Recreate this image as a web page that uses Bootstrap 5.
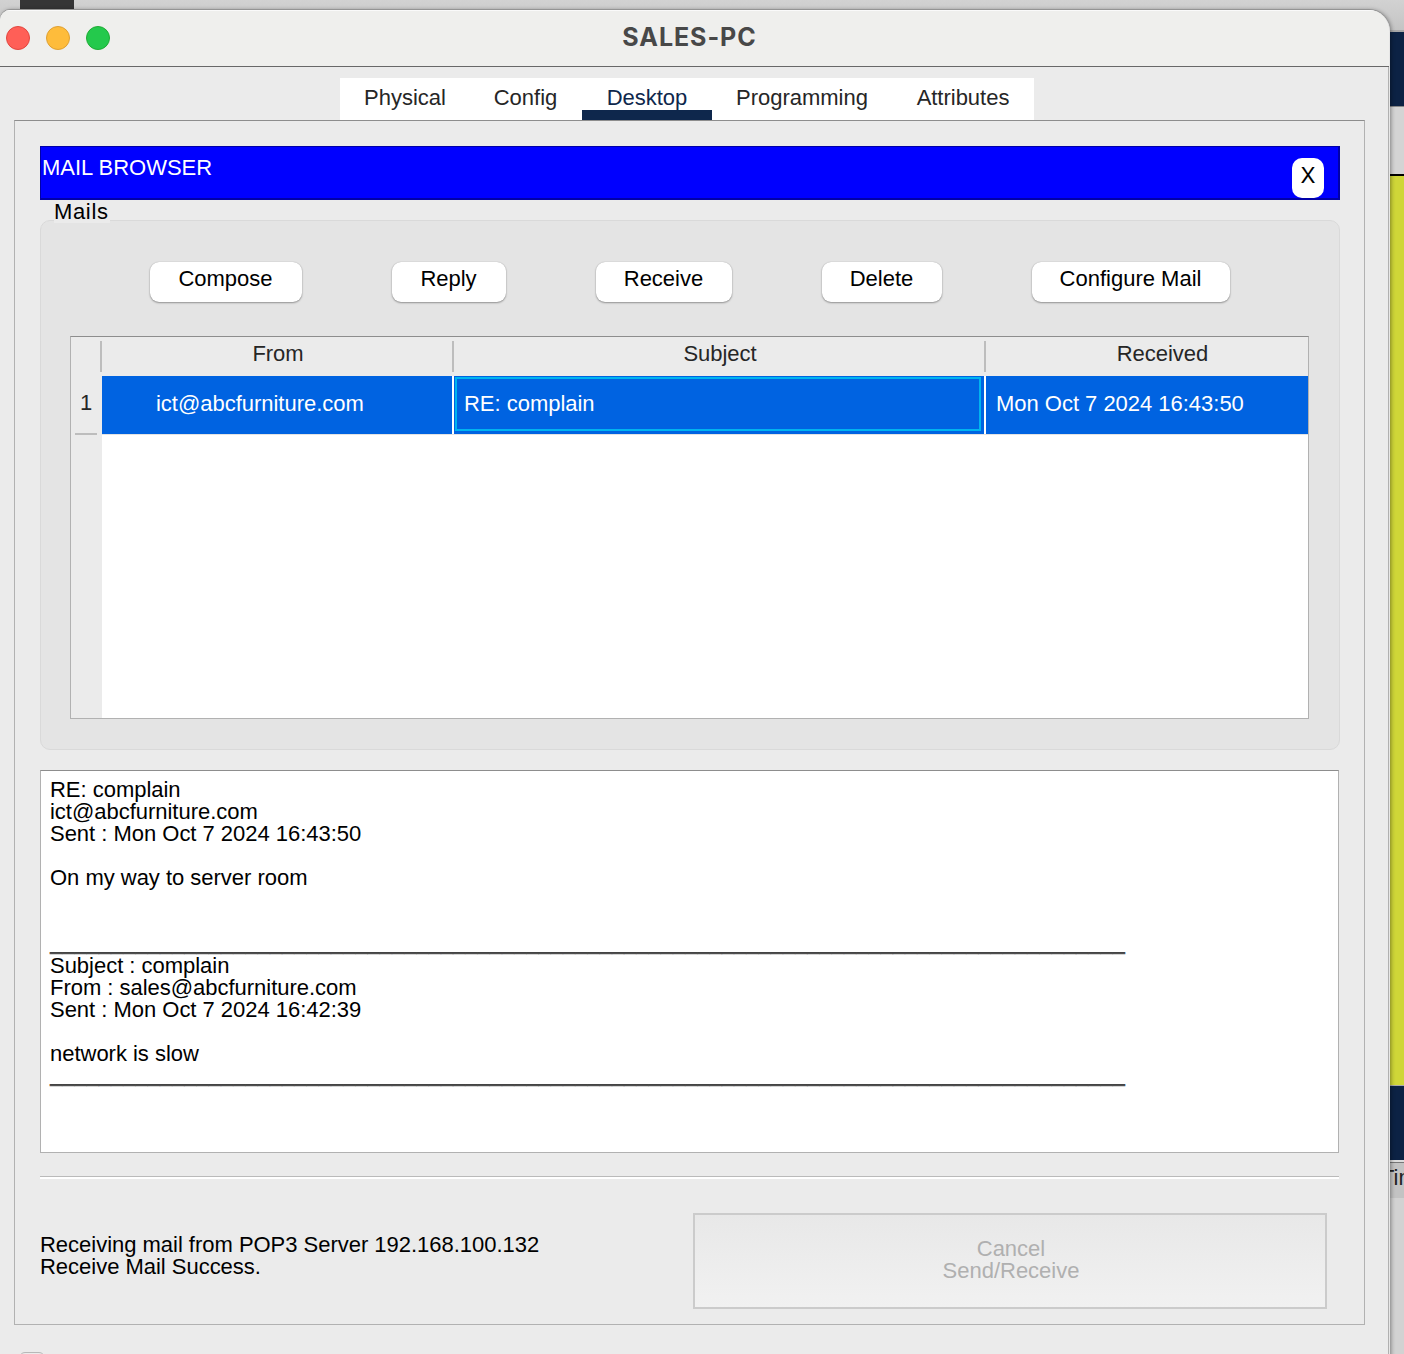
<!DOCTYPE html>
<html lang="en">
<head>
<meta charset="utf-8">
<title>SALES-PC</title>
<link href="https://cdn.jsdelivr.net/npm/bootstrap@5.3.0/dist/css/bootstrap.min.css" rel="stylesheet">
<style>
body{width:1404px;height:1354px;overflow:hidden;font:22px/22px "Liberation Sans",Arial,sans-serif;color:#000;background:#d3d3d3;letter-spacing:-.02px}
.desk{width:1404px;height:1354px;background:#cecece}
.desk-top{height:32px;background:linear-gradient(#d2d2d2,#c4c4c4);padding-left:20px;border-bottom:2px solid #a8a8a8}
.desk-dark{width:54px;height:30px;background:#353536}
.desk-side{width:24px;margin-left:auto}
.navy{background:#0c2244}
.lime{background:#cfd638}
.peek{height:36px;background:#c3c3c3;border-top:1px solid #777;overflow:hidden;color:#222;white-space:nowrap;padding:4px 0 0 1px}
.win{left:0;top:10px;width:1390px;height:1360px;background:#ebebeb;border-right:1px solid #e6e6e6;border-top-right-radius:21px;border-top-left-radius:10px;box-shadow:0 -1px 0 #949494,1px 0 4px rgba(0,0,0,.4);overflow:hidden}
.win-edge{width:1389px;border-right:1px solid #b0b0b0;height:1300px}
.titlebar{height:57px;background:#efefed;border-top:1px solid #fafafa;border-bottom:1px solid #686868;padding:0 0 2px 6px;gap:16px}
.light{width:24px;height:24px;border-radius:50%;border:1px solid}
.title{font:700 25px/30px Inter,"Liberation Sans",sans-serif;color:#484848;letter-spacing:.95px;left:0;width:1379px;top:12px}
.tabs{margin:11px 0 0 340px;height:42px;width:694px;background:#fff;color:#262626}
.tabs .nav-link{padding:9px 0 0;color:inherit;line-height:22px;border-radius:0;height:42px;text-align:center}
.tabs .nav-link.active{color:#0e274c;border-bottom:10px solid #0e274c}
.pane{margin-left:14px;width:1351px;height:1205px;border:1px solid #b1b1b1;border-top-color:#8d8d8d;padding:25px 25px 0}
.mailbar{width:1300px;height:54px;background:#00f;border:solid #0000a8;border-width:1px 2px 2px 1px;color:#fff;padding:10px 14px 0 1px}
.xbtn{width:32px;height:40px;border:0;background:#fff;border-radius:10px;padding:0 0 7px;font:22px/22px Inter,sans-serif;margin-top:1px;color:#000}
.legend-txt{height:20px;padding:2px 0 0 14px;letter-spacing:.65px;position:relative;z-index:1;width:max-content;margin:0}
.legend-txt span{display:block;height:23px;background:#ebebeb;padding-right:1px;margin-top:-2px;line-height:24px}
.group{width:1300px;height:530px;background:#e4e4e4;border:1px solid #d9d9d9;border-radius:10px;padding:41px 29px 0}
.tools{padding:0 80px 0 80px;height:74px}
.mbtn{height:40px;background:#fff;border-radius:9px;border:0;box-shadow:0 1px 2px rgba(0,0,0,.35),0 0 1px rgba(0,0,0,.25);font-size:22px;line-height:22px;padding:0 1px 6px 0;text-align:center;color:#000;display:block}
.grid{width:1239px;height:383px;background:#fff;border:1px solid #b1b1b1;border-top-color:#8d8d8d}
.rowhead{width:31px;background:#ebebeb;color:#262626}
.rowhead div{width:22px;height:94px;margin:4px 0 0 4px;border-bottom:2px solid #bdbdbd;padding-top:51px;text-align:center}
.heads{height:39px;background:#ebebeb;color:#262626}
.heads div{height:31px;margin-top:4px;text-align:center;padding:2px 0 0 2px}
.sep{border-left:2px solid #bdbdbd}
.cells{height:59px;border-bottom:1px solid #e3e3e3;color:#fff;gap:2px}
.cell{background:#0063e1;height:58px;padding-top:17px}
.cell.subject{width:530px;padding:1px 3px 3px 1px}
.focused{height:54px;border:2px solid #00b4f0;padding:14px 0 0 7px}
.reader{width:1299px;height:383px;background:#fff;border:1px solid #b1b1b1;border-top-color:#8d8d8d;margin:20px 0 0;padding:8px 9px;font:22px/22px "Liberation Sans",Arial,sans-serif;overflow:hidden}
.dash{position:relative;top:-2px;color:#444;text-shadow:0 1px 0 #555}
.rule{width:1299px;height:3px;border-top:1px solid #bababa;background:#fff;margin-top:23px}
.cancel.btn{width:634px;height:96px;border:2px solid #cbcbcb;border-radius:0;background:linear-gradient(#e8e8e8,#f1f1f1);color:#b0b0b0;font-size:22px;line-height:22px;padding:0 0 2px 2px;opacity:1}
.statusrow{margin-top:34px;width:1287px}
.box{width:26px;height:26px;margin:27px 0 0 19px;border:1px solid #b8b8b8;border-radius:6px}
</style>
</head>
<body>
<div class="desk">
  <div class="desk-top"><div class="desk-dark"></div></div>
  <div class="desk-side">
    <div class="navy" style="height:74px"></div>
    <div style="height:68px;background:#d4d4d4;border-top:1px solid #888"></div>
    <div class="lime" style="height:911px;border-top:2px solid #000"></div>
    <div class="navy" style="height:77px;border-top:1px solid #aaa;border-bottom:2px solid #ddd"></div>
    <div class="peek">Time</div>
    <div style="height:156px;background:#d2d2d2"></div>
  </div>
</div>
<main class="win position-absolute">
 <div class="position-relative">
  <header class="titlebar d-flex align-items-center">
    <i class="light" style="background:#ff5f57;border-color:#e2463f"></i>
    <i class="light" style="background:#febc3b;border-color:#dfa032"></i>
    <i class="light" style="background:#24c94c;border-color:#1eac34"></i>
  </header>
  <h1 class="title position-absolute text-center m-0">SALES-PC</h1>
 </div>
 <div class="win-edge overflow-hidden">
  <nav class="nav tabs flex-nowrap">
    <a class="nav-link" style="width:130px">Physical</a>
    <a class="nav-link" style="width:111px">Config</a>
    <a class="nav-link active" style="width:130px;margin-left:1px">Desktop</a>
    <a class="nav-link" style="width:180px">Programming</a>
    <a class="nav-link" style="width:142px">Attributes</a>
  </nav>
  <section class="pane">
    <div class="mailbar d-flex justify-content-between"><span>MAIL BROWSER</span><button class="xbtn">X</button></div>
    <div class="legend-txt"><span>Mails</span></div>
    <div class="group">
      <div class="tools d-flex justify-content-between">
        <button class="mbtn" style="width:152px">Compose</button>
        <button class="mbtn" style="width:114px">Reply</button>
        <button class="mbtn" style="width:136px">Receive</button>
        <button class="mbtn" style="width:120px">Delete</button>
        <button class="mbtn" style="width:198px">Configure Mail</button>
      </div>
      <div class="grid d-flex">
        <div class="rowhead"><div>1</div></div>
        <div class="flex-grow-1">
          <div class="heads d-flex">
            <div class="sep" style="width:352px;margin-left:-2px">From</div>
            <div class="sep" style="width:532px">Subject</div>
            <div class="sep flex-grow-1"><span style="padding-left:29px">Received</span></div>
          </div>
          <div class="cells d-flex">
            <div class="cell" style="width:350px;padding-left:54px">ict@abcfurniture.com</div>
            <div class="cell subject"><div class="focused">RE: complain</div></div>
            <div class="cell flex-grow-1" style="padding-left:10px">Mon Oct 7 2024 16:43:50</div>
          </div>
        </div>
      </div>
    </div>
    <pre class="reader">RE: complain
ict@abcfurniture.com
Sent : Mon Oct 7 2024 16:43:50

On my way to server room


<span class="dash">________________________________________________________________________________________</span>
Subject : complain
From : sales@abcfurniture.com
Sent : Mon Oct 7 2024 16:42:39

network is slow
<span class="dash">________________________________________________________________________________________</span></pre>
    <div class="rule"></div>
    <div class="statusrow d-flex justify-content-between">
      <div style="padding-top:21px">Receiving mail from POP3 Server 192.168.100.132<br>Receive Mail Success.</div>
      <button class="btn cancel" disabled>Cancel<br>Send/Receive</button>
    </div>
  </section>
  <div class="box"></div>
 </div>
</main>
<script src="https://cdn.jsdelivr.net/npm/bootstrap@5.3.0/dist/js/bootstrap.bundle.min.js"></script>
</body>
</html>
